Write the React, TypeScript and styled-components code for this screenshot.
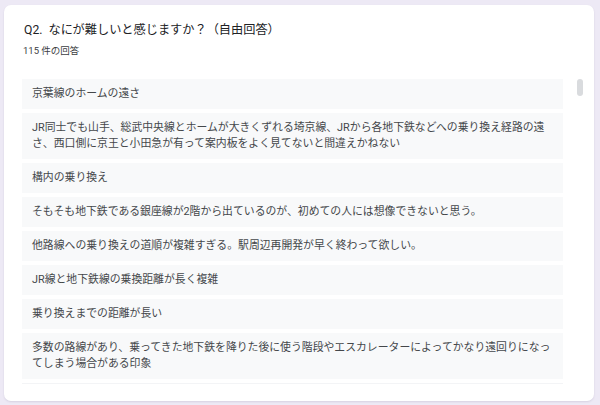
import styled, { createGlobalStyle } from "styled-components";

const answers = [
    "京葉線のホームの遠さ",
    "JR同士でも山手、総武中央線とホームが大きくずれる埼京線、JRから各地下鉄などへの乗り換え経路の遠さ、西口側に京王と小田急が有って案内板をよく見てないと間違えかねない",
    "構内の乗り換え",
    "そもそも地下鉄である銀座線が2階から出ているのが、初めての人には想像できないと思う。",
    "他路線への乗り換えの道順が複雑すぎる。駅周辺再開発が早く終わって欲しい。",
    "JR線と地下鉄線の乗換距離が長く複雑",
    "乗り換えまでの距離が長い",
    "多数の路線があり、乗ってきた地下鉄を降りた後に使う階段やエスカレーターによってかなり遠回りになってしまう場合がある印象",
];

const GlobalStyle = createGlobalStyle`
    html, body {
        margin: 0;
        background: #ede9f5;
    }
    body {
        padding: 5px 6px 4px 4px;
        font-family: "Roboto", "Noto Sans CJK JP", sans-serif;
    }
`

export default function App() {
    return (
        <>
            <GlobalStyle/>
            <Card>
                <Title>Q2.&nbsp; なにが難しいと感じますか？（自由回答）</Title>
                <Count>115 件の回答</Count>
                <ListWrap>
                    <List>
                        {answers.map((a, i) => (
                            <Answer key={i}>{a}</Answer>
                        ))}
                    </List>
                    <Track>
                        <Thumb/>
                    </Track>
                </ListWrap>
            </Card>
        </>
    );
}

const Card = styled.div`
    box-sizing: border-box;
    width: 590px;
    height: 396px;
    background: #fff;
    border-radius: 7px;
    box-shadow: 0 1px 2px rgba(60, 50, 90, 0.12);
    padding: 16px 0 15px 18px;
    display: flex;
    flex-direction: column;
`

const Title = styled.div`
    padding-left: 2px;
    font-size: 12.2px;
    line-height: 18px;
    color: #202124;
`

const Count = styled.div`
    padding-left: 1px;
    margin-top: 5px;
    font-size: 9.5px;
    line-height: 14px;
    color: #3c4043;
`

const ListWrap = styled.div`
    margin-top: 21px;
    flex: 1;
    min-height: 0;
    display: flex;
    overflow: hidden;
`

const List = styled.div`
    width: 541px;
    display: flex;
    flex-direction: column;
    gap: 4px;
    padding-bottom: 4px;
    border-bottom: 1px solid #f3f4f6;
    align-self: flex-start;
`

const Answer = styled.div`
    flex-shrink: 0;
    background: #f8f9fa;
    padding: 7px 8px 7px 10px;
    font-size: 10.85px;
    line-height: 16px;
    color: #44474a;
`

const Track = styled.div`
    margin-left: 14px;
    width: 6px;
`

const Thumb = styled.div`
    height: 17px;
    border-radius: 3px;
    background: #d9dbde;
`
